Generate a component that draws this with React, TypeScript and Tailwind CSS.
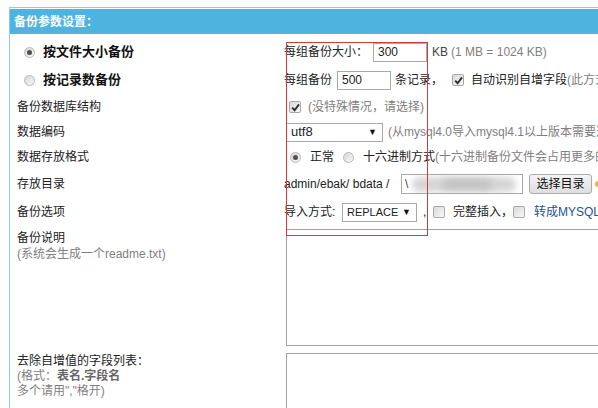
import React from "react";

const Radio = ({ checked = false }: { checked?: boolean }) => (
  <span className="inline-flex w-[11px] h-[11px] shrink-0 items-center justify-center rounded-full border border-[#b8b8b8] bg-linear-to-br from-[#d6d6d6] to-[#f8f8f8]">
    {checked && <span className="w-[5px] h-[5px] rounded-full bg-[#505050]" />}
  </span>
);

const Check = ({ checked = false }: { checked?: boolean }) => (
  <span className="inline-flex w-[12px] h-[12px] shrink-0 items-center justify-center rounded-[2px] border border-[#a8a8a8] bg-linear-to-br from-[#dadada] to-[#f8f8f8]">
    {checked && (
      <svg width="9" height="9" viewBox="0 0 9 9">
        <path d="M1.2 4.6 L3.6 7.2 L8 1.4" fill="none" stroke="#2f2f2f" strokeWidth="1.9" />
      </svg>
    )}
  </span>
);

const TextInput = ({ value, w }: { value: string; w: string }) => (
  <span className={`inline-flex items-center h-[19px] border border-[#a9a9a9] bg-white pl-[4px] text-[12px] text-[#222] ${w}`}>
    {value}
  </span>
);

const Select = ({ value, w, size }: { value: string; w: string; size: string }) => (
  <span className={`inline-flex items-center justify-between h-[19px] border border-[#a9a9a9] bg-white pl-[4px] pr-[5px] text-[#222] ${w} ${size}`}>
    <span>{value}</span>
    <span className="text-[9px] text-[#111]">▼</span>
  </span>
);

export default function App() {
  const gray = "text-[#808080]";
  return (
    <div className="relative w-[598px] h-[408px] overflow-hidden bg-white pt-[7px] pl-[9px] font-['Liberation_Sans','Noto_Sans_CJK_SC',sans-serif] text-[12px] leading-[14px] text-[#222]">
      <div className="border-l border-t border-[#8ccbea] pt-px">
        <div className="h-[25px] bg-[#4fb3df] pl-[4px] flex items-center text-white font-bold text-[12px]">
          备份参数设置：
        </div>
        <div className="pt-[4px]">
          {/* row1 */}
          <div className="flex h-[28px] items-center">
            <div className="w-[274px] shrink-0 pl-[14px] flex items-center">
              <Radio checked />
              <span className="ml-[8px] font-bold text-[13px] text-[#111]">按文件大小备份</span>
            </div>
            <div className="flex items-center whitespace-nowrap">
              <span>每组备份大小：</span>
              <span className="ml-[5px]"><TextInput value="300" w="w-[54px]" /></span>
              <span className="ml-[5px] text-[#444]">KB</span>
              <span className={`ml-[3px] ${gray}`}>(1 MB = 1024 KB)</span>
            </div>
          </div>
          {/* row2 */}
          <div className="flex h-[28px] items-center">
            <div className="w-[274px] shrink-0 pl-[14px] flex items-center">
              <Radio />
              <span className="ml-[8px] font-bold text-[13px] text-[#111]">按记录数备份</span>
            </div>
            <div className="flex items-center whitespace-nowrap">
              <span>每组备份</span>
              <span className="ml-[5px]"><TextInput value="500" w="w-[54px]" /></span>
              <span className="ml-[4px]">条记录，</span>
              <span className="ml-[9px] flex"><Check checked /></span>
              <span className="ml-[7px]">自动识别自增字段</span>
              <span className={gray}>(此方式效率更高)</span>
            </div>
          </div>
          {/* row3 */}
          <div className="flex h-[26px] items-center">
            <div className="w-[274px] shrink-0 pl-[7px]">备份数据库结构</div>
            <div className="flex items-center whitespace-nowrap">
              <span className="ml-[5px] flex"><Check checked /></span>
              <span className={`ml-[7px] ${gray}`}>(没特殊情况，请选择)</span>
            </div>
          </div>
          {/* row4 */}
          <div className="flex h-[24px] items-center">
            <div className="w-[274px] shrink-0 pl-[7px]">数据编码</div>
            <div className="flex items-center whitespace-nowrap">
              <span className="ml-[2px]"><Select value="utf8" w="w-[97px]" size="text-[13px]" /></span>
              <span className={`ml-[5px] ${gray}`}>(从mysql4.0导入mysql4.1以上版本需要选择GBK编码)</span>
            </div>
          </div>
          {/* row5 */}
          <div className="flex h-[26px] items-center">
            <div className="w-[274px] shrink-0 pl-[7px]">数据存放格式</div>
            <div className="flex items-center whitespace-nowrap">
              <span className="ml-[6px] flex"><Radio checked /></span>
              <span className="ml-[9px]">正常</span>
              <span className="ml-[9px] flex"><Radio /></span>
              <span className="ml-[9px]">十六进制方式</span>
              <span className={gray}>(十六进制备份文件会占用更多的空间)</span>
            </div>
          </div>
          {/* row6 */}
          <div className="flex h-[28px] items-center">
            <div className="w-[274px] shrink-0 pl-[7px]">存放目录</div>
            <div className="flex items-center whitespace-nowrap">
              <span className="w-[117px] shrink-0">admin/ebak/ bdata /</span>
              <span className="relative inline-flex items-center w-[122px] h-[20px] border border-[#a9a9a9] bg-white overflow-hidden pl-[3px]">
                <span className="text-[#444]">\</span>
                <span className="absolute left-[10px] top-[2px] w-[104px] h-[15px] rounded-full bg-[#d6d6d6] blur-[3px]" />
                <span className="absolute left-[40px] top-[4px] w-[50px] h-[11px] rounded-full bg-[#c4c4c4] blur-[3px]" />
              </span>
              <span className="ml-[6px] inline-flex items-center justify-center w-[63px] h-[20px] rounded-[3px] border border-[#acacac] bg-linear-to-b from-[#f4f4f4] to-[#dedede] text-[12px] text-[#111]">
                选择目录
              </span>
              <span className="ml-[3px] w-[6px] h-[6px] rounded-full bg-[#f2b640]" />
            </div>
          </div>
          {/* row7 */}
          <div className="flex h-[28px] items-center">
            <div className="w-[274px] shrink-0 pl-[7px]">备份选项</div>
            <div className="flex items-center whitespace-nowrap">
              <span className="w-[58px] shrink-0">导入方式:</span>
              <Select value="REPLACE" w="w-[75px]" size="text-[11px]" />
              <span className="w-[16px] shrink-0 pl-[6px]">,</span>
              <span className="flex"><Check /></span>
              <span className="ml-[8px] w-[60px] shrink-0">完整插入，</span>
              <span className="flex"><Check /></span>
              <span className="ml-[9px] text-[#1d4f9c]">转成MYSQL4.0格式</span>
            </div>
          </div>
          {/* row8 */}
          <div className="flex h-[123px] items-start">
            <div className="w-[274px] shrink-0 pl-[7px] pt-[4px] leading-[16px]">
              <div>备份说明</div>
              <div className={gray}>(系统会生成一个readme.txt)</div>
            </div>
            <div className="ml-[2px] mt-[3px] w-[400px] h-[117px] border border-[#a0a0a0] shrink-0" />
          </div>
          {/* row9 */}
          <div className="flex h-[80px] items-start">
            <div className="w-[274px] shrink-0 pl-[7px] pt-[5px] leading-[15px]">
              <div>去除自增值的字段列表：</div>
              <div className={gray}>
                (格式：<span className="font-bold text-[#666]">表名.字段名</span>
              </div>
              <div className={gray}>多个请用&quot;,&quot;格开)</div>
            </div>
            <div className="ml-[2px] mt-[4px] w-[400px] h-[117px] border border-[#a0a0a0] shrink-0" />
          </div>
        </div>
      </div>
      <div className="absolute left-[286px] top-[42px] w-[142px] h-[194px] border border-[#d23a3c]" />
    </div>
  );
}
